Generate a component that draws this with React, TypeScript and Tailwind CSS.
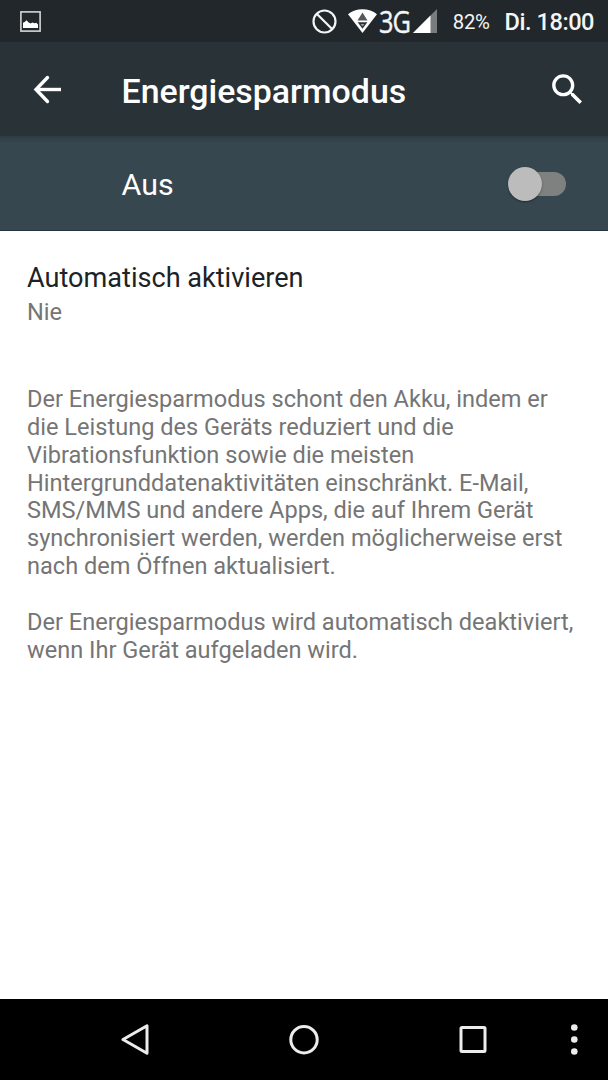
import { useState } from "react";
import { clsx } from "clsx";

const PARAGRAPHS = [
  [
    "Der Energiesparmodus schont den Akku, indem er",
    "die Leistung des Geräts reduziert und die",
    "Vibrationsfunktion sowie die meisten",
    "Hintergrunddatenaktivitäten einschränkt. E-Mail,",
    "SMS/MMS und andere Apps, die auf Ihrem Gerät",
    "synchronisiert werden, werden möglicherweise erst",
    "nach dem Öffnen aktualisiert.",
  ],
  [
    "Der Energiesparmodus wird automatisch deaktiviert,",
    "wenn Ihr Gerät aufgeladen wird.",
  ],
];

function StatusBar() {
  return (
    <div className="flex h-[42px] shrink-0 items-center bg-[#21272b] pl-5 pr-[14px] text-[#f4f5f5]">
      {/* screenshot notification */}
      <svg className="h-[21px] w-[21px]" viewBox="0 0 21 21">
        <rect x="0.9" y="0.9" width="19.2" height="19.2" fill="none" stroke="#d4d6d7" strokeWidth="1.6" />
        <path d="M3 17V11.8l1.7-.8 1.8-1.8 1.8 2 2.2 1.3 2-.9 2 .6 1.8-.4 1.7 1.6V17z" fill="#fff" />
      </svg>
      <div className="ml-auto flex items-center">
        {/* do not disturb */}
        <svg className="h-[25px] w-[25px]" viewBox="0 0 25 25" fill="none" stroke="#f4f5f5" strokeWidth="2.2">
          <circle cx="12.5" cy="12.5" r="11" />
          <path d="M4.7 4.7l15.6 15.6" />
        </svg>
        {/* wifi with traffic arrows */}
        <svg className="ml-[11px] h-6 w-[29px]" viewBox="0 0 29 24">
          <path d="M0 5.2C4 1.9 9 .2 14.5.2S25 1.9 29 5.2L14.5 24z" fill="#fff" />
          <path d="M14.5 3.5l5 8h-10z" fill="#54595c" />
          <path d="M9.6 13.2h9.8l-4.9 6.6z" fill="#2c3236" />
          <path d="M12.6 15h3.8l-1.9 2.6z" fill="#9a9d9f" />
        </svg>
        <span className="ml-[2px] w-[32px] origin-left scale-x-[0.82] whitespace-nowrap font-['Open_Sans',sans-serif] text-[31px] leading-none tracking-[-1.4px] [-webkit-text-stroke:0.4px]">
          3G
        </span>
        <svg className="ml-[2px] h-6 w-6" viewBox="0 0 24 24">
          <path d="M0 24L24 0v24z" fill="#787c7e" />
          <path d="M0 24L17.5 6.5V24z" fill="#fff" />
        </svg>
        <span className="ml-4 mt-[3px] text-[20.3px] leading-none tracking-[-0.3px]">82%</span>
        <span className="ml-[15px] mt-[3px] text-[23.6px] font-medium leading-none tracking-[-0.48px]">
          Di. 18:00
        </span>
      </div>
    </div>
  );
}

function AppBar() {
  return (
    <header className="flex h-[94px] shrink-0 items-center bg-[#283237] pl-8 pr-[20px]">
      <button aria-label="Zurück">
        <svg
          className="h-[30px] w-[30px]"
          viewBox="0 0 30 30"
          fill="none"
          stroke="#fff"
          strokeWidth="3.4"
        >
          <path d="M29 15.5H4" />
          <path d="M15.5 3.5L4 15.5l11.5 12" strokeLinecap="round" />
        </svg>
      </button>
      <h1 className="ml-[59.5px] mt-1.5 text-[33.9px] font-medium leading-none text-white">
        Energiesparmodus
      </h1>
      <button aria-label="Suchen" className="ml-auto">
        <svg className="h-[41px] w-[41px]" viewBox="0 0 24 24" fill="#fff">
          <path d="M15.5 14h-.79l-.28-.27C15.41 12.59 16 11.11 16 9.5 16 5.91 13.09 3 9.5 3S3 5.91 3 9.5 5.91 16 9.5 16c1.61 0 3.09-.59 4.23-1.57l.27.28v.79l5 4.99L20.49 19l-4.99-5zm-6 0C7.01 14 5 11.99 5 9.5S7.01 5 9.5 5 14 7.01 14 9.5 11.99 14 9.5 14z" />
        </svg>
      </button>
    </header>
  );
}

function SwitchBar() {
  const [on, setOn] = useState(false);

  return (
    <div className="h-[95px] shrink-0 border-b border-[#26343b] bg-[#37474f]">
      <div className="h-[7px] bg-linear-to-b from-[#2e3b42] to-[#37474f]" />
      <div className="flex h-[82px] items-center justify-between pl-[121.5px] pr-[42px]">
        <span className="mt-[3px] text-[30.4px] leading-none text-white">{on ? "An" : "Aus"}</span>
        <button
          role="switch"
          aria-checked={on}
          aria-label="Energiesparmodus"
          onClick={() => setOn(!on)}
          className={clsx(
            "flex h-6 w-[58px] items-center rounded-full bg-linear-to-r from-transparent from-[8px] to-[#7f8080] to-[8px]",
            on && "justify-end",
          )}
        >
          <span className="h-[34px] w-[34px] rounded-full bg-[#bcbcbc] shadow-[0_1px_2px_rgba(0,0,0,0.4)]" />
        </button>
      </div>
    </div>
  );
}

function NavigationBar() {
  return (
    <nav className="flex h-[81px] shrink-0 items-center bg-black pl-[52px] text-[#ececec]">
      <button aria-label="Zurück" className="flex w-[168px] justify-center">
        <svg className="h-8 w-8" viewBox="0 0 32 32" fill="none" stroke="currentColor" strokeWidth="3">
          <path d="M3 15.5L27 1.7v27.6z" strokeLinejoin="round" />
        </svg>
      </button>
      <button aria-label="Startbildschirm" className="flex w-[168px] justify-center">
        <svg className="h-8 w-8" viewBox="0 0 32 32" fill="none" stroke="currentColor" strokeWidth="3">
          <circle cx="16" cy="15.7" r="13.2" />
        </svg>
      </button>
      <button aria-label="Übersicht" className="flex w-[168px] justify-center">
        <svg className="h-8 w-8" viewBox="0 0 32 32" fill="none" stroke="currentColor" strokeWidth="3">
          <rect x="5" y="3.5" width="24" height="24" rx="1" />
        </svg>
      </button>
      <button aria-label="Menü" className="flex w-9 justify-center">
        <svg className="h-8 w-2" viewBox="0 0 8 32" fill="currentColor">
          <circle cx="4.3" cy="3.5" r="3.3" />
          <circle cx="4.3" cy="15.5" r="3.3" />
          <circle cx="4.3" cy="27.5" r="3.3" />
        </svg>
      </button>
    </nav>
  );
}

export default function App() {
  return (
    <div className="flex h-[1080px] w-[608px] flex-col overflow-hidden bg-white font-[Roboto,sans-serif]">
      <StatusBar />
      <AppBar />
      <SwitchBar />
      <main className="flex-1 px-[27px] pt-[31px]">
        <h2 className="text-[27.1px] leading-8 text-[#1c2327]">Automatisch aktivieren</h2>
        <p className="mt-1 text-[23.6px] leading-[28px] text-[#757575]">Nie</p>
        <div className="mt-[60px] flex flex-col gap-[28px] whitespace-nowrap text-[23.57px] leading-[27.85px] text-[#757575]">
          {PARAGRAPHS.map((lines) => (
            <p key={lines[0]}>
              {lines.map((line) => (
                <span key={line} className="block">
                  {line}
                </span>
              ))}
            </p>
          ))}
        </div>
      </main>
      <NavigationBar />
    </div>
  );
}
